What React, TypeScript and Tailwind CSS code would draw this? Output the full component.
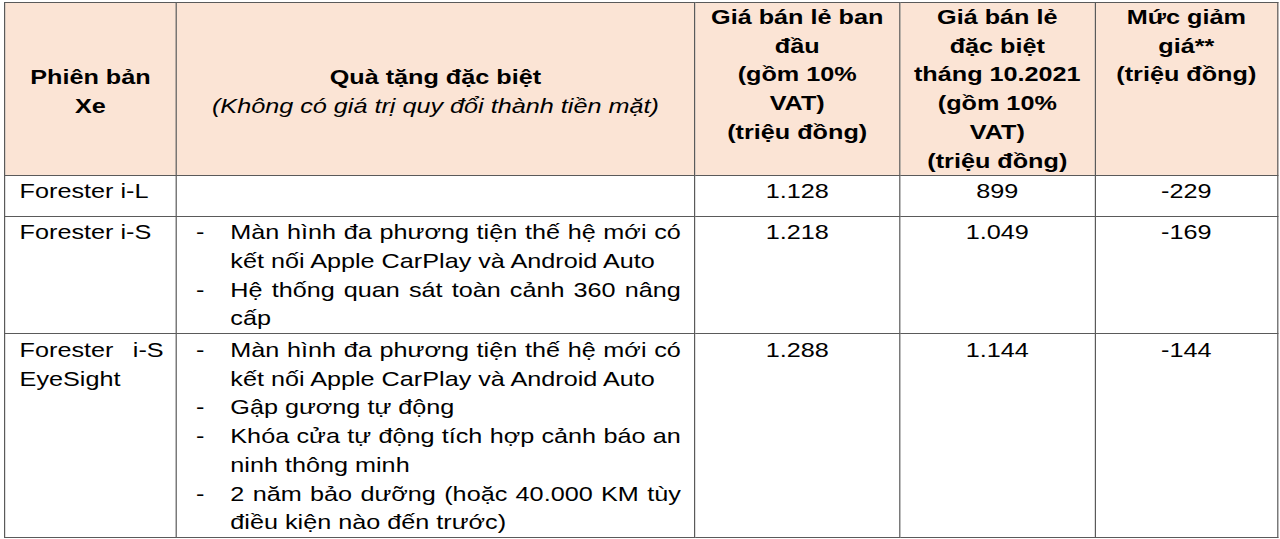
import React from "react";

const J = "text-justify [text-align-last:justify]";

function Item({ lines }: { lines: { t: string; j?: boolean }[] }) {
  return (
    <div className="flex">
      <span className="w-[28.6px] shrink-0">-</span>
      <div className="flex-1">
        {lines.map((l, i) => (
          <div key={i} className={l.j ? J : "text-left"}>
            {l.t}
          </div>
        ))}
      </div>
    </div>
  );
}

const cell = "border border-[#5a5a5a] align-top p-0";
const head = "border border-[#5a5a5a] bg-[#fbe4d5] font-bold text-center p-0";

export default function App() {
  return (
    <div className="w-[1280px] h-[539px] bg-white overflow-hidden pt-[2px] pl-[4px]">
      <div className="w-[1061px] origin-top-left scale-x-[1.2]">
        <table className="w-[1061px] table-fixed border-collapse font-['Liberation_Sans',Arial,sans-serif] text-[21px] leading-[28.7px] text-black">
          <colgroup>
            <col className="w-[143px]" />
            <col className="w-[432px]" />
            <col className="w-[171px]" />
            <col className="w-[162.5px]" />
            <col className="w-[152.5px]" />
          </colgroup>
          <thead>
            <tr>
              <th className={`${head} align-middle pt-[6px]`}>
                <div>Phiên bản</div>
                <div>Xe</div>
              </th>
              <th className={`${head} align-middle pt-[6px]`}>
                <div>Quà tặng đặc biệt</div>
                <div className="font-normal italic">(Không có giá trị quy đổi thành tiền mặt)</div>
              </th>
              <th className={`${head} align-top`}>
                <div>Giá bán lẻ ban</div>
                <div>đầu</div>
                <div>(gồm 10%</div>
                <div>VAT)</div>
                <div>(triệu đồng)</div>
              </th>
              <th className={`${head} align-top`}>
                <div>Giá bán lẻ</div>
                <div>đặc biệt</div>
                <div>tháng 10.2021</div>
                <div>(gồm 10%</div>
                <div>VAT)</div>
                <div>(triệu đồng)</div>
              </th>
              <th className={`${head} align-top`}>
                <div>Mức giảm</div>
                <div>giá**</div>
                <div>(triệu đồng)</div>
              </th>
            </tr>
          </thead>
          <tbody>
            <tr className="h-[41px]">
              <td className={`${cell} pl-[12px] pr-[10px] pt-[1px]`}>Forester i-L</td>
              <td className={cell}></td>
              <td className={`${cell} text-center pt-[1px]`}>1.128</td>
              <td className={`${cell} text-center pt-[1px]`}>899</td>
              <td className={`${cell} text-center pt-[1px]`}>-229</td>
            </tr>
            <tr>
              <td className={`${cell} pl-[12px] pr-[10px] pt-[1px]`}>Forester i-S</td>
              <td className={`${cell} pl-[16px] pr-[11px] pt-[1px]`}>
                <Item
                  lines={[
                    { t: "Màn hình đa phương tiện thế hệ mới có", j: true },
                    { t: "kết nối Apple CarPlay và Android Auto" },
                  ]}
                />
                <Item
                  lines={[
                    { t: "Hệ thống quan sát toàn cảnh 360 nâng", j: true },
                    { t: "cấp" },
                  ]}
                />
              </td>
              <td className={`${cell} text-center pt-[1px]`}>1.218</td>
              <td className={`${cell} text-center pt-[1px]`}>1.049</td>
              <td className={`${cell} text-center pt-[1px]`}>-169</td>
            </tr>
            <tr>
              <td className={`${cell} pl-[12px] pr-[10px] pt-[2px]`}>
                <div className={J}>Forester i-S</div>
                <div>EyeSight</div>
              </td>
              <td className={`${cell} pl-[16px] pr-[11px] pt-[2px]`}>
                <Item
                  lines={[
                    { t: "Màn hình đa phương tiện thế hệ mới có", j: true },
                    { t: "kết nối Apple CarPlay và Android Auto" },
                  ]}
                />
                <Item lines={[{ t: "Gập gương tự động" }]} />
                <Item
                  lines={[
                    { t: "Khóa cửa tự động tích hợp cảnh báo an", j: true },
                    { t: "ninh thông minh" },
                  ]}
                />
                <Item
                  lines={[
                    { t: "2 năm bảo dưỡng (hoặc 40.000 KM tùy", j: true },
                    { t: "điều kiện nào đến trước)" },
                  ]}
                />
              </td>
              <td className={`${cell} text-center pt-[2px]`}>1.288</td>
              <td className={`${cell} text-center pt-[2px]`}>1.144</td>
              <td className={`${cell} text-center pt-[2px]`}>-144</td>
            </tr>
          </tbody>
        </table>
      </div>
    </div>
  );
}
